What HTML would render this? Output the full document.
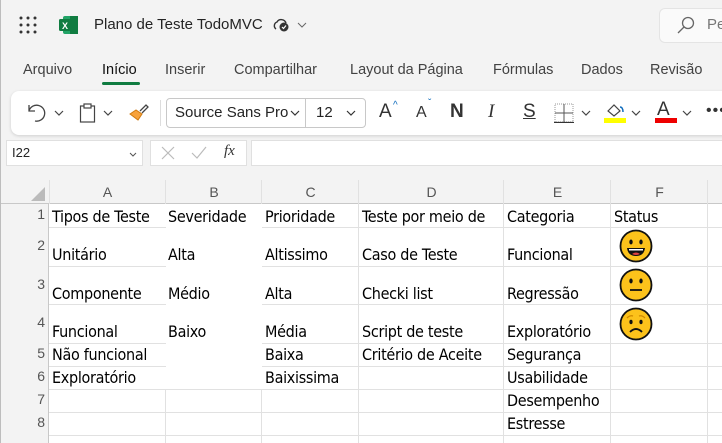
<!DOCTYPE html>
<html><head><meta charset="utf-8">
<style>
*{box-sizing:border-box;margin:0;padding:0}
body{width:722px;height:443px;overflow:hidden;background:#f3f3f3;font-family:"Liberation Sans","DejaVu Sans",sans-serif;position:relative;border-left:1px solid #bdbdbd}
.a{position:absolute;white-space:nowrap}
.tab{position:absolute;top:62px;font-size:14.5px;color:#424242}
.g{position:absolute;background:#e1e1e1}
.c{position:absolute;font-size:16px;color:#000;white-space:nowrap;font-family:"DejaVu Sans Condensed","Liberation Sans Narrow","Liberation Sans",sans-serif;letter-spacing:-0.3px;margin-top:1px}
.rh{position:absolute;left:0;width:44px;text-align:right;font-size:14px;color:#555}
.ch{position:absolute;top:184px;font-size:14px;color:#555;text-align:center}
</style></head><body>
<svg class="a" style="left:18px;top:16px" width="18" height="18"><g fill="#333"><circle cx="2" cy="2" r="1.5"/><circle cx="9" cy="2" r="1.5"/><circle cx="16" cy="2" r="1.5"/><circle cx="2" cy="9" r="1.5"/><circle cx="9" cy="9" r="1.5"/><circle cx="16" cy="9" r="1.5"/><circle cx="2" cy="16" r="1.5"/><circle cx="9" cy="16" r="1.5"/><circle cx="16" cy="16" r="1.5"/></g></svg>
<svg class="a" style="left:58px;top:16px" width="19" height="18"><rect x="4" y="0" width="15" height="18" rx="2" fill="#21a366"/><rect x="11" y="0" width="8" height="18" fill="#107c41"/><rect x="0" y="3" width="12" height="12" rx="1.5" fill="#107c41"/><text x="3" y="13" font-size="9" fill="#fff" font-family="Liberation Sans" font-weight="bold">X</text></svg>
<div class="a" style="left:93px;top:16px;font-size:15px;color:#242424">Plano de Teste TodoMVC</div>
<svg class="a" style="left:271px;top:17px" width="18" height="16"><path d="M4 12a4 4 0 0 1 1-7 5 5 0 0 1 9 1" fill="none" stroke="#333" stroke-width="1.4"/><circle cx="12" cy="10" r="4.5" fill="#333"/><path d="M10 10l1.5 1.5 2.5-3" stroke="#fff" fill="none" stroke-width="1.2"/></svg>
<svg class="a" style="left:296px;top:22px" width="10" height="6"><path d="M1 1l4 4 4-4" fill="none" stroke="#666"/></svg>
<div class="a" style="left:658px;top:8px;width:80px;height:35px;background:#fafafa;border:1px solid #e4e4e4;border-radius:6px"></div>
<svg class="a" style="left:676px;top:16px" width="18" height="18"><circle cx="11" cy="7" r="5.5" fill="none" stroke="#666" stroke-width="1.3"/><path d="M7 11l-6 6" stroke="#666" stroke-width="1.3"/></svg>
<div class="a" style="left:706px;top:16px;font-size:15px;color:#777">Pe</div>
<div class="tab" style="left:22px">Arquivo</div>
<div class="tab" style="left:101px;color:#111">Início</div>
<div class="a" style="left:101px;top:82px;width:38px;height:3px;background:#107c41;border-radius:2px"></div>
<div class="tab" style="left:164px">Inserir</div>
<div class="tab" style="left:233px">Compartilhar</div>
<div class="tab" style="left:349px">Layout da Página</div>
<div class="tab" style="left:492px">Fórmulas</div>
<div class="tab" style="left:580px">Dados</div>
<div class="tab" style="left:649px">Revisão</div>
<div class="a" style="left:10px;top:91px;width:730px;height:44px;background:#fff;border-radius:8px;box-shadow:0 1px 3px rgba(0,0,0,.15)"></div>
<svg class="a" style="left:25px;top:103px" width="22" height="20"><path d="M3 2v6h6M3 8a8 8 0 1 1 6 10" fill="none" stroke="#444" stroke-width="1.3"/></svg>
<svg class="a" style="left:53px;top:110px" width="10" height="6"><path d="M1 1l4 4 4-4" fill="none" stroke="#444" stroke-width="1.2"/></svg>
<svg class="a" style="left:78px;top:103px" width="18" height="20"><rect x="1.5" y="3" width="14" height="16" fill="none" stroke="#444" stroke-width="1.2"/><rect x="5" y="1" width="7" height="4" fill="#fff" stroke="#444" stroke-width="1.2"/></svg>
<svg class="a" style="left:102px;top:110px" width="10" height="6"><path d="M1 1l4 4 4-4" fill="none" stroke="#444" stroke-width="1.2"/></svg>
<svg class="a" style="left:127px;top:104px" width="21" height="18"><path d="M2 10l8 6 4-6-6-4z" fill="#f7a23b" stroke="#d07a10"/><path d="M12 7l6-6 2 2-6 6" fill="none" stroke="#444" stroke-width="1.3"/></svg>
<div class="a" style="left:159px;top:100px;width:1px;height:26px;background:#ddd"></div>
<div class="a" style="left:165px;top:98px;width:200px;height:30px;border:1px solid #c8c8c8;border-radius:4px"></div>
<div class="a" style="left:304px;top:99px;width:1px;height:28px;background:#c8c8c8"></div>
<div class="a" style="left:174px;top:104px;font-size:15px;color:#242424">Source Sans Pro</div>
<svg class="a" style="left:289px;top:110px" width="10" height="6"><path d="M1 1l4 4 4-4" fill="none" stroke="#333" stroke-width="1.2"/></svg>
<div class="a" style="left:315px;top:104px;font-size:15px;color:#242424">12</div>
<svg class="a" style="left:345px;top:110px" width="10" height="6"><path d="M1 1l4 4 4-4" fill="none" stroke="#333" stroke-width="1.2"/></svg>
<div class="a" style="left:378px;top:101px;font-size:19px;color:#333">A</div><div class="a" style="left:392px;top:100px;font-size:10px;color:#0f6cbd">^</div>
<div class="a" style="left:415px;top:104px;font-size:16px;color:#333">A</div><div class="a" style="left:427px;top:98px;font-size:10px;color:#0f6cbd">ˇ</div>
<div class="a" style="left:449px;top:101px;font-size:19px;font-weight:bold;color:#333">N</div>
<div class="a" style="left:487px;top:101px;font-size:19px;font-style:italic;font-family:'Liberation Serif',serif;color:#333">I</div>
<div class="a" style="left:522px;top:101px;font-size:19px;color:#333;text-decoration:underline">S</div>
<svg class="a" style="left:553px;top:103px" width="20" height="20"><rect x="1" y="1" width="18" height="18" fill="none" stroke="#999" stroke-dasharray="1 1"/><path d="M10 1v18M1 10h18" stroke="#555"/><path d="M0 19.5h20" stroke="#333" stroke-width="1.3"/></svg>
<svg class="a" style="left:580px;top:110px" width="10" height="6"><path d="M1 1l4 4 4-4" fill="none" stroke="#444" stroke-width="1.2"/></svg>
<svg class="a" style="left:604px;top:102px" width="22" height="16"><path d="M3 9l6-6 6 6-6 5z" fill="none" stroke="#444" stroke-width="1.2"/><path d="M15 5q3 0 3 5" fill="none" stroke="#0f6cbd" stroke-width="1.5"/></svg>
<div class="a" style="left:603px;top:118px;width:22px;height:5px;background:#ffff00"></div>
<svg class="a" style="left:630px;top:110px" width="10" height="6"><path d="M1 1l4 4 4-4" fill="none" stroke="#444" stroke-width="1.2"/></svg>
<div class="a" style="left:656px;top:99px;font-size:19px;color:#333">A</div>
<div class="a" style="left:654px;top:118px;width:22px;height:5px;background:#e00"></div>
<svg class="a" style="left:681px;top:110px" width="10" height="6"><path d="M1 1l4 4 4-4" fill="none" stroke="#444" stroke-width="1.2"/></svg>
<div class="a" style="left:705px;top:102px;font-size:16px;color:#333;letter-spacing:1px">•••</div>
<div class="a" style="left:5px;top:140px;width:137px;height:26px;background:#fff;border:1px solid #e0e0e0"></div>
<div class="a" style="left:11px;top:145px;font-size:13px;color:#242424">I22</div>
<svg class="a" style="left:128px;top:152px" width="8" height="5"><path d="M1 1l3 3 3-3" fill="none" stroke="#555"/></svg>
<div class="a" style="left:149px;top:140px;width:97px;height:26px;background:#fff;border:1px solid #e0e0e0"></div>
<svg class="a" style="left:160px;top:146px" width="14" height="14"><path d="M1 1l12 12M13 1L1 13" stroke="#bbb" stroke-width="1.2"/></svg>
<svg class="a" style="left:190px;top:146px" width="16" height="14"><path d="M1 7l5 5 9-11" fill="none" stroke="#bbb" stroke-width="1.2"/></svg>
<div class="a" style="left:223px;top:143px;font-size:15px;font-style:italic;font-family:'Liberation Serif',serif;color:#333">fx</div>
<div class="a" style="left:250px;top:140px;width:480px;height:26px;background:#fff;border:1px solid #e0e0e0"></div>
<div class="a" style="left:0;top:180px;width:722px;height:263px;background:#fff"></div>
<div class="a" style="left:0;top:180px;width:722px;height:24px;background:#f3f3f3;border-bottom:1px solid #c8c8c8"></div>
<div class="a" style="left:0;top:204px;width:48px;height:239px;background:#f3f3f3;border-right:1px solid #c8c8c8"></div>
<svg class="a" style="left:30px;top:187px" width="14" height="14"><path d="M14 0v14H0z" fill="#bbb"/></svg>
<div class="g" style="left:48px;top:180px;width:1px;height:24px"></div>
<div class="ch" style="left:48px;width:117px">A</div><div class="g" style="left:164px;top:180px;width:1px;height:24px"></div>
<div class="ch" style="left:165px;width:96px">B</div><div class="g" style="left:260px;top:180px;width:1px;height:24px"></div>
<div class="ch" style="left:261px;width:97px">C</div><div class="g" style="left:357px;top:180px;width:1px;height:24px"></div>
<div class="ch" style="left:358px;width:145px">D</div><div class="g" style="left:502px;top:180px;width:1px;height:24px"></div>
<div class="ch" style="left:503px;width:107px">E</div><div class="g" style="left:609px;top:180px;width:1px;height:24px"></div>
<div class="ch" style="left:610px;width:97px">F</div><div class="g" style="left:706px;top:180px;width:1px;height:24px"></div>
<div class="g" style="left:48px;top:227px;width:117px;height:1px"></div>
<div class="g" style="left:48px;top:266px;width:117px;height:1px"></div>
<div class="g" style="left:48px;top:304px;width:117px;height:1px"></div>
<div class="g" style="left:48px;top:343px;width:117px;height:1px"></div>
<div class="g" style="left:48px;top:366px;width:117px;height:1px"></div>
<div class="g" style="left:261px;top:227px;width:461px;height:1px"></div>
<div class="g" style="left:261px;top:266px;width:461px;height:1px"></div>
<div class="g" style="left:261px;top:304px;width:461px;height:1px"></div>
<div class="g" style="left:261px;top:343px;width:461px;height:1px"></div>
<div class="g" style="left:261px;top:366px;width:461px;height:1px"></div>
<div class="g" style="left:48px;top:389px;width:674px;height:1px"></div>
<div class="g" style="left:48px;top:412px;width:674px;height:1px"></div>
<div class="g" style="left:48px;top:435px;width:674px;height:1px"></div>
<div class="g" style="left:164px;top:389px;width:1px;height:54px"></div>
<div class="g" style="left:260px;top:389px;width:1px;height:54px"></div>
<div class="g" style="left:357px;top:204px;width:1px;height:239px"></div>
<div class="g" style="left:502px;top:204px;width:1px;height:239px"></div>
<div class="g" style="left:609px;top:204px;width:1px;height:239px"></div>
<div class="g" style="left:706px;top:204px;width:1px;height:239px"></div>
<div class="rh" style="top:206px">1</div>
<div class="rh" style="top:237px">2</div>
<div class="rh" style="top:276px">3</div>
<div class="rh" style="top:314px">4</div>
<div class="rh" style="top:345px">5</div>
<div class="rh" style="top:368px">6</div>
<div class="rh" style="top:391px">7</div>
<div class="rh" style="top:414px">8</div>
<div class="c" style="left:51px;top:206px">Tipos de Teste</div>
<div class="c" style="left:167px;top:206px">Severidade</div>
<div class="c" style="left:264px;top:206px">Prioridade</div>
<div class="c" style="left:361px;top:206px">Teste por meio de</div>
<div class="c" style="left:506px;top:206px">Categoria</div>
<div class="c" style="left:613px;top:206px">Status</div>
<div class="c" style="left:51px;top:244px">Unitário</div>
<div class="c" style="left:167px;top:244px">Alta</div>
<div class="c" style="left:264px;top:244px">Altissimo</div>
<div class="c" style="left:361px;top:244px">Caso de Teste</div>
<div class="c" style="left:506px;top:244px">Funcional</div>
<div class="c" style="left:51px;top:283px">Componente</div>
<div class="c" style="left:167px;top:283px">Médio</div>
<div class="c" style="left:264px;top:283px">Alta</div>
<div class="c" style="left:361px;top:283px">Checki list</div>
<div class="c" style="left:506px;top:283px">Regressão</div>
<div class="c" style="left:51px;top:321px">Funcional</div>
<div class="c" style="left:167px;top:321px">Baixo</div>
<div class="c" style="left:264px;top:321px">Média</div>
<div class="c" style="left:361px;top:321px">Script de teste</div>
<div class="c" style="left:506px;top:321px">Exploratório</div>
<div class="c" style="left:51px;top:344px">Não funcional</div>
<div class="c" style="left:264px;top:344px">Baixa</div>
<div class="c" style="left:361px;top:344px">Critério de Aceite</div>
<div class="c" style="left:506px;top:344px">Segurança</div>
<div class="c" style="left:51px;top:367px">Exploratório</div>
<div class="c" style="left:264px;top:367px">Baixissima</div>
<div class="c" style="left:506px;top:367px">Usabilidade</div>
<div class="c" style="left:506px;top:390px">Desempenho</div>
<div class="c" style="left:506px;top:413px">Estresse</div>
<svg class="a" style="left:618px;top:229px" width="34" height="34"><circle cx="17" cy="17" r="15.5" fill="#fcc21b" stroke="#111" stroke-width="1.8"/><ellipse cx="12" cy="13" rx="1.7" ry="2.5" fill="#111"/><ellipse cx="22" cy="13" rx="1.7" ry="2.5" fill="#111"/><path d="M8 19h18q-1 8-9 8t-9-8z" fill="#111"/><path d="M10 20h14v1.5H10z" fill="#fff"/><path d="M13 25q4-3 8 0q-4 2-8 0z" fill="#e04040"/></svg>
<svg class="a" style="left:618px;top:268px" width="34" height="34"><circle cx="17" cy="17" r="15.5" fill="#fcc21b" stroke="#111" stroke-width="1.8"/><ellipse cx="12" cy="13" rx="1.7" ry="2.5" fill="#111"/><ellipse cx="22" cy="13" rx="1.7" ry="2.5" fill="#111"/><path d="M11 22h12" stroke="#111" stroke-width="1.8"/></svg>
<svg class="a" style="left:618px;top:307px" width="34" height="34"><circle cx="17" cy="17" r="15.5" fill="#fcc21b" stroke="#111" stroke-width="1.8"/><path d="M8 11q3-3 6-2M26 11q-3-3-6-2" fill="none" stroke="#d08a00" stroke-width="1.3"/><ellipse cx="12" cy="15" rx="1.6" ry="2.2" fill="#111"/><ellipse cx="22" cy="15" rx="1.6" ry="2.2" fill="#111"/><path d="M11 25q6-6 12 0" fill="none" stroke="#111" stroke-width="1.8"/></svg>
</body></html>
